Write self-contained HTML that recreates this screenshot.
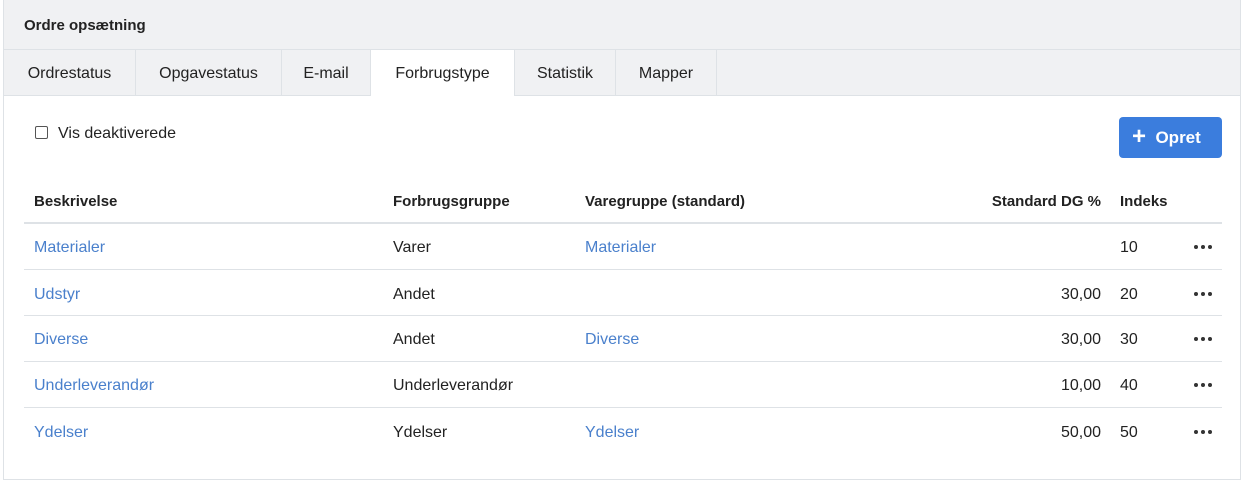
<!DOCTYPE html>
<html><head><meta charset="utf-8"><style>
*{box-sizing:border-box;margin:0;padding:0}
body{width:1244px;height:470px;background:#fff;font-family:"Liberation Sans",sans-serif;font-size:16px;color:#222;position:relative;overflow:hidden}
.card{position:absolute;left:3px;top:0;width:1238px;height:480px;border:1px solid #dee2e6;border-top:none}
.hdr{height:50px;background:#f0f1f3;border-bottom:1px solid #dee2e6;padding:17px 0 0 20px;font-weight:bold;font-size:15px}
.tabs{height:46px;background:#f0f1f3;border-bottom:1px solid #dee2e6;display:flex}
.tab{height:46px;border-right:1px solid #dee2e6;padding:15px 0 0 0;text-align:center;font-size:16px}
.tab.act{background:#fff;height:46px;margin-bottom:-1px}
.cb{position:absolute;left:35px;top:126px;width:13px;height:13px;border:1px solid #555;border-radius:2px}
.cbl{position:absolute;left:58px;top:125px}
.btn{position:absolute;left:1119px;top:117px;width:103px;height:41px;background:#3b7ddd;border-radius:4px;color:#fff;font-weight:bold;font-size:17px;padding:10px 0 0 13px}
.btn b{font-size:24px;position:relative;top:1px;line-height:17px}
.t{position:absolute;font-size:16px}
.h{font-weight:bold;top:193px;font-size:15px}
.a{color:#4a80cc}
.line{position:absolute;left:24px;width:1198px;height:1px;background:#dee2e6}
.r{text-align:right;width:200px}
.dots{position:absolute;left:1194px;width:18px;height:4px;display:flex;justify-content:space-between}
.dots i{width:4px;height:4px;border-radius:50%;background:#333}
</style></head><body>
<div class="card">
<div class="hdr">Ordre opsætning</div>
<div class="tabs">
<div class="tab" style="width:132px">Ordrestatus</div>
<div class="tab" style="width:146px">Opgavestatus</div>
<div class="tab" style="width:89px">E-mail</div>
<div class="tab act" style="width:144px">Forbrugstype</div>
<div class="tab" style="width:101px">Statistik</div>
<div class="tab" style="width:101px">Mapper</div>
</div>
</div>
<div class="cb"></div><div class="cbl">Vis deaktiverede</div>
<div class="btn"><b>+</b>&nbsp; Opret</div>
<div class="t h" style="left:34px">Beskrivelse</div>
<div class="t h" style="left:393px">Forbrugsgruppe</div>
<div class="t h" style="left:585px">Varegruppe (standard)</div>
<div class="t h r" style="left:901px">Standard DG %</div>
<div class="t h" style="left:1120px">Indeks</div>
<div class="line" style="top:222px;height:2px"></div>

<div class="t a" style="left:34px;top:239px">Materialer</div>
<div class="t" style="left:393px;top:239px">Varer</div>
<div class="t a" style="left:585px;top:239px">Materialer</div>
<div class="t" style="left:1120px;top:239px">10</div>
<div class="dots" style="top:245px"><i></i><i></i><i></i></div>
<div class="line" style="top:269px"></div>

<div class="t a" style="left:34px;top:286px">Udstyr</div>
<div class="t" style="left:393px;top:286px">Andet</div>
<div class="t r" style="left:901px;top:286px">30,00</div>
<div class="t" style="left:1120px;top:286px">20</div>
<div class="dots" style="top:292px"><i></i><i></i><i></i></div>
<div class="line" style="top:315px"></div>

<div class="t a" style="left:34px;top:331px">Diverse</div>
<div class="t" style="left:393px;top:331px">Andet</div>
<div class="t a" style="left:585px;top:331px">Diverse</div>
<div class="t r" style="left:901px;top:331px">30,00</div>
<div class="t" style="left:1120px;top:331px">30</div>
<div class="dots" style="top:337px"><i></i><i></i><i></i></div>
<div class="line" style="top:361px"></div>

<div class="t a" style="left:34px;top:377px">Underleverandør</div>
<div class="t" style="left:393px;top:377px">Underleverandør</div>
<div class="t r" style="left:901px;top:377px">10,00</div>
<div class="t" style="left:1120px;top:377px">40</div>
<div class="dots" style="top:383px"><i></i><i></i><i></i></div>
<div class="line" style="top:407px"></div>

<div class="t a" style="left:34px;top:424px">Ydelser</div>
<div class="t" style="left:393px;top:424px">Ydelser</div>
<div class="t a" style="left:585px;top:424px">Ydelser</div>
<div class="t r" style="left:901px;top:424px">50,00</div>
<div class="t" style="left:1120px;top:424px">50</div>
<div class="dots" style="top:430px"><i></i><i></i><i></i></div>
</body></html>
